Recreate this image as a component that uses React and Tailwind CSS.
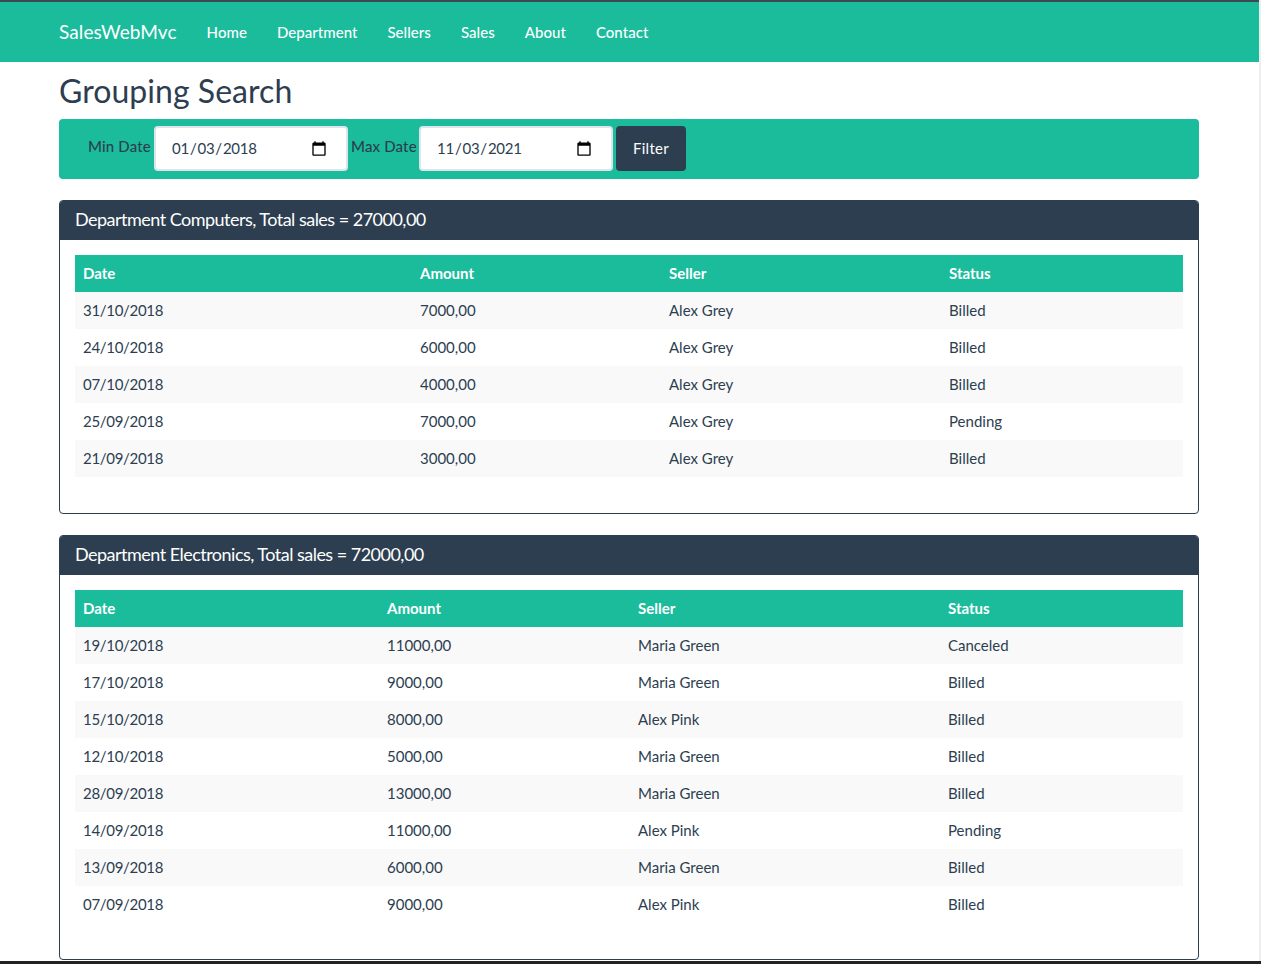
import { useState } from 'react';

const navLinks = ['Home', 'Department', 'Sellers', 'Sales', 'About', 'Contact'];

const groups = [
  {
    name: 'Computers',
    total: '27000,00',
    widths: ['w-[337px]', 'w-[249px]', 'w-[280px]', 'w-[242px]'],
    rows: [
      ['31/10/2018', '7000,00', 'Alex Grey', 'Billed'],
      ['24/10/2018', '6000,00', 'Alex Grey', 'Billed'],
      ['07/10/2018', '4000,00', 'Alex Grey', 'Billed'],
      ['25/09/2018', '7000,00', 'Alex Grey', 'Pending'],
      ['21/09/2018', '3000,00', 'Alex Grey', 'Billed'],
    ],
  },
  {
    name: 'Electronics',
    total: '72000,00',
    widths: ['w-[304px]', 'w-[251px]', 'w-[310px]', 'w-[243px]'],
    rows: [
      ['19/10/2018', '11000,00', 'Maria Green', 'Canceled'],
      ['17/10/2018', '9000,00', 'Maria Green', 'Billed'],
      ['15/10/2018', '8000,00', 'Alex Pink', 'Billed'],
      ['12/10/2018', '5000,00', 'Maria Green', 'Billed'],
      ['28/09/2018', '13000,00', 'Maria Green', 'Billed'],
      ['14/09/2018', '11000,00', 'Alex Pink', 'Pending'],
      ['13/09/2018', '6000,00', 'Maria Green', 'Billed'],
      ['07/09/2018', '9000,00', 'Alex Pink', 'Billed'],
    ],
  },
];

const DateField = ({ label, value, onChange, labelWidth }) => (
  <>
    <label className={`font-medium leading-[22px] mb-[6px] tracking-[0.15px] ${labelWidth}`}>{label}</label>
    <input
      type="date"
      value={value}
      onChange={e => onChange(e.target.value)}
      className="w-[194px] h-[45px] bg-white border-2 border-[#dce4ec] rounded-[4px] pl-[15px] pr-[19px] pb-[2px] text-[15px] tracking-[-0.25px] text-[#2c3e50] mr-[3px] outline-none [&::-webkit-calendar-picker-indicator]:w-[16px] [&::-webkit-calendar-picker-indicator]:h-[19px] [&::-webkit-calendar-picker-indicator]:p-0 [&::-webkit-calendar-picker-indicator]:mt-[2px] [&::-webkit-calendar-picker-indicator]:[background-size:100%_100%]"
    />
  </>
);

const SalesCard = ({ group }) => (
  <section className="border border-[#2c3e50] rounded-[4px] mb-[21px] overflow-hidden">
    <h3 className="bg-[#2c3e50] text-white text-[18px] leading-[22px] font-normal h-[39px] px-[15px] pt-[7px] tracking-[-0.52px]">
      Department {group.name}, Total sales = {group.total}
    </h3>
    <div className="px-[15px] pt-[15px] pb-[36px]">
      <table className="w-[1108px] table-fixed border-collapse">
        <thead>
          <tr className="bg-[#1abc9c] text-white h-[37px]">
            {['Date', 'Amount', 'Seller', 'Status'].map((h, i) => (
              <th key={h} className={`${group.widths[i]} px-[8px] pb-[2px] text-left font-bold`}>{h}</th>
            ))}
          </tr>
        </thead>
        <tbody>
          {group.rows.map((row, i) => (
            <tr key={row[0]} className={`h-[37px] ${i % 2 === 0 ? 'bg-[#f9f9f9]' : 'bg-white'}`}>
              {row.map((cell, j) => (
                <td key={j} className={`px-[8px] pb-[2px] ${j === 0 ? 'tracking-[-0.3px]' : ''}`}>{cell}</td>
              ))}
            </tr>
          ))}
        </tbody>
      </table>
    </div>
  </section>
);

export default function App() {
  const [minDate, setMinDate] = useState('2018-01-03');
  const [maxDate, setMaxDate] = useState('2021-11-03');

  return (
    <div className="h-[964px] overflow-hidden flex flex-col bg-white text-[#2c3e50] text-[15px] leading-[22px] font-['Lato',_'Open_Sans',sans-serif]">
      <div className="flex-1 min-h-0 overflow-hidden border-r-2 border-[#eeeeee]">
        <nav className="h-[62px] bg-[#1abc9c] border-t-2 border-[#3b4a52] flex items-center pl-[59px] text-white">
          <a className="text-[19px] mr-[15px] font-normal tracking-[0.1px]">SalesWebMvc</a>
          {navLinks.map(link => (
            <a key={link} className="px-[15px] font-medium tracking-[0.04px]">{link}</a>
          ))}
        </nav>
        <main className="px-[59px] w-[1258px]">
          <h2 className="text-[32px] leading-[38px] font-normal mt-[10px] mb-[9px] tracking-[0.05px]">Grouping Search</h2>
          <form className="h-[60px] bg-[#1abc9c] rounded-[4px] flex items-center pl-[29px] pb-[1px] mb-[21px]">
            <DateField label="Min Date" value={minDate} onChange={setMinDate} labelWidth="w-[66px]" />
            <DateField label="Max Date" value={maxDate} onChange={setMaxDate} labelWidth="w-[68px]" />
            <button type="button" className="w-[70px] h-[45px] bg-[#2c3e50] text-white rounded-[4px] pb-[2px] tracking-[0.3px]">Filter</button>
          </form>
          {groups.map(group => <SalesCard key={group.name} group={group} />)}
        </main>
      </div>
      <div className="h-[3px] shrink-0 bg-[#222222]" />
    </div>
  );
}
